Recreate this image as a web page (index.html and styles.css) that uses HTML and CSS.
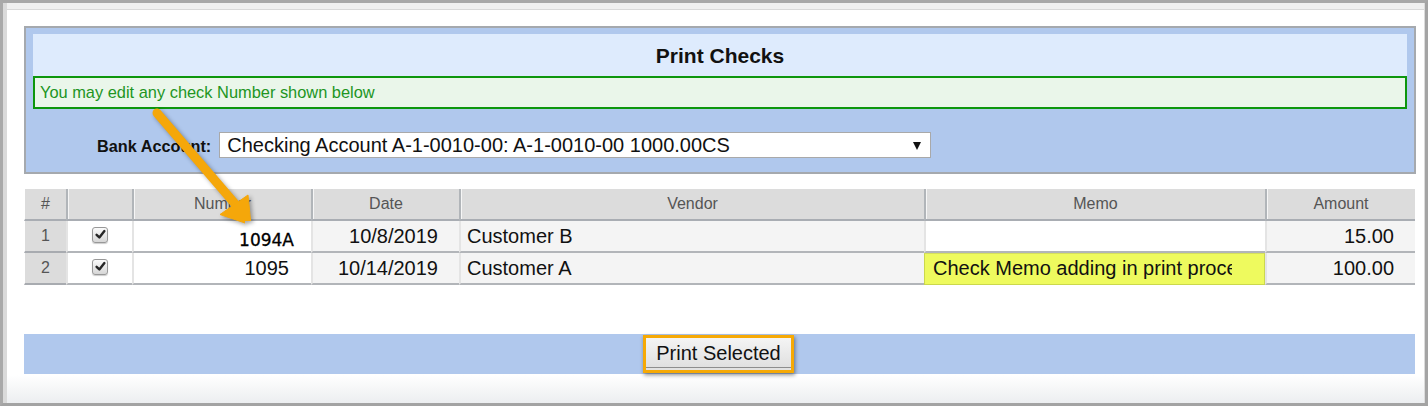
FILE: index.html
```html
<!DOCTYPE html>
<html lang="en">
<head>
<meta charset="utf-8">
<title>Print Checks</title>
<link rel="stylesheet" href="styles.css">
</head>
<body>
<div class="frame">
  <div class="inner">
    <div class="topbar"></div>
    <div class="page">
      <section class="panel">
        <div class="panel-head"><h1 class="title">Print Checks</h1></div>
        <div class="notice">You may edit any check Number shown below</div>
        <div class="bank-row">
          <span class="bank-label">Bank Account:</span>
          <div class="select">
            <span class="select-text">Checking Account A-1-0010-00: A-1-0010-00 1000.00CS</span>
            <span class="caret"></span>
          </div>
        </div>
      </section>

      <div class="grid">
        <div class="hd hd-first">#</div>
        <div class="hd"></div>
        <div class="hd">Number</div>
        <div class="hd">Date</div>
        <div class="hd">Vendor</div>
        <div class="hd">Memo</div>
        <div class="hd">Amount</div>

        <div class="cell c-idx">1</div>
        <div class="cell c-chk"><span class="checkbox"><svg viewBox="0 0 16 16"><path d="M3.2 8.4 L6.6 11.6 L12.8 3.8" fill="none" stroke="#262626" stroke-width="3" stroke-linecap="round" stroke-linejoin="round"/></svg></span></div>
        <div class="cell c-no c-no-edit">1094A</div>
        <div class="cell c-date">10/8/2019</div>
        <div class="cell c-vendor">Customer B</div>
        <div class="cell c-memo"></div>
        <div class="cell c-amt">15.00</div>

        <div class="cell c-idx">2</div>
        <div class="cell c-chk"><span class="checkbox"><svg viewBox="0 0 16 16"><path d="M3.2 8.4 L6.6 11.6 L12.8 3.8" fill="none" stroke="#262626" stroke-width="3" stroke-linecap="round" stroke-linejoin="round"/></svg></span></div>
        <div class="cell c-no">1095</div>
        <div class="cell c-date">10/14/2019</div>
        <div class="cell c-vendor">Customer A</div>
        <div class="cell c-memo c-memo-hl"><span class="memo-text">Check Memo adding in print process</span></div>
        <div class="cell c-amt">100.00</div>
      </div>

      <div class="actions">
        <div class="btn-ring"><button class="btn" type="button">Print Selected</button></div>
      </div>
    </div>
  </div>

  <svg class="arrow" width="1428" height="406" viewBox="0 0 1428 406">
    <defs>
      <clipPath id="cut">
        <path d="M0 0H1428V221H245V406H0Z"/>
      </clipPath>
    </defs>
    <g clip-path="url(#cut)" fill="#f5a70a" stroke="#f5a70a">
      <line x1="157" y1="113" x2="236" y2="205" stroke-width="9" stroke-linecap="round"/>
      <polygon points="251,225 220,214.5 248,195" stroke-width="1" stroke-linejoin="round"/>
    </g>
  </svg>
</div>
</body>
</html>
```

FILE: styles.css
```css
* { box-sizing: border-box; }

html, body {
  margin: 0;
  padding: 0;
  background: #ffffff;
}

body {
  font-family: "Liberation Sans", Arial, sans-serif;
  color: #111;
}

.frame {
  position: relative;
  width: 1428px;
  height: 406px;
  border-top: 3px solid #a8a8a8;
  border-left: 3px solid #a9a9a9;
  border-right: 3px solid #a4a4a4;
  border-bottom: 3px solid #a3a3a3;
  overflow: hidden;
}

.inner {
  height: 100%;
  border-left: 4px solid #dadada;
  border-right: 1px solid #dcdcdc;
  background: linear-gradient(to bottom, #ffffff 0, #ffffff 372px, #eceef0 400px);
}

.topbar {
  height: 7px;
  background: #f0f0f0;
  border-bottom: 1px solid #d9d9d9;
}

.page {
  padding: 16px 8px 0 17px;
}

/* ---------- top panel ---------- */
.panel {
  width: 1392px;
  border: 2px solid #a5a9ae;
  background: #b0c8ed;
  padding: 6px 7px 0 7px;
}

.panel-head {
  height: 42px;
  background: #deebfd;
  display: flex;
  align-items: center;
  justify-content: center;
}

.title {
  margin: 0;
  font-size: 21px;
  font-weight: bold;
  color: #111;
  padding-top: 1px;
}

.notice {
  height: 33px;
  border: 2px solid #0d960d;
  background: #eaf6ea;
  color: #21951f;
  font-size: 16.4px;
  line-height: 29px;
  padding-left: 5px;
}

.bank-row {
  display: flex;
  align-items: center;
  gap: 8px;
  padding: 23px 0 14px 64px;
}

.bank-label {
  font-size: 16.3px;
  font-weight: bold;
  color: #111;
  padding-top: 3px;
}

.select {
  width: 712px;
  height: 26px;
  background: #ffffff;
  border: 1px solid #a9a9a9;
  display: flex;
  align-items: center;
  justify-content: space-between;
  padding: 0 9px 0 7px;
}

.select-text {
  font-size: 20px;
  color: #111;
  white-space: nowrap;
}

.caret {
  width: 0;
  height: 0;
  border-left: 4.5px solid transparent;
  border-right: 4.5px solid transparent;
  border-top: 8px solid #111;
  margin-top: 1px;
}

/* ---------- grid ---------- */
.grid {
  margin-top: 15px;
  display: grid;
  width: 1391px;
  grid-template-columns: 42px 66px 179px 148px 465px 341px 150px;
  grid-auto-rows: 32px;
}

.hd {
  background: #dcdcdc;
  color: #555;
  font-size: 16px;
  text-align: center;
  line-height: 30px;
  border-bottom: 2px solid #a9adb3;
  border-left: 2px solid #b1b5b9;
  box-shadow: inset 1px 0 0 #f6f6f6;
}

.hd-first {
  border-left: 1px solid #ffffff;
  box-shadow: none;
}

.cell {
  font-size: 20px;
  line-height: 30px;
  color: #111;
  border-bottom: 2px solid #b2b5b9;
  border-left: 2px solid #e4e4e4;
  white-space: nowrap;
  overflow: hidden;
}

.c-idx {
  background: #dcdcdc;
  color: #555;
  font-size: 16px;
  text-align: center;
  border-left: 1px solid #ffffff;
  border-bottom-color: #a8abb0;
}

.c-chk {
  background: #ffffff;
  display: flex;
  align-items: center;
  justify-content: center;
  padding-bottom: 3px;
}

.checkbox {
  width: 16px;
  height: 16px;
  border: 1px solid #989898;
  border-radius: 3px;
  background: linear-gradient(to bottom, #fbfbfb, #d6d6d6);
  box-shadow: 0 1px 1px rgba(0,0,0,0.2);
  display: flex;
  align-items: center;
  justify-content: center;
}

.checkbox svg {
  width: 13px;
  height: 13px;
  display: block;
}

.c-no {
  background: #ffffff;
  text-align: right;
  padding-right: 22px;
}

.c-no-edit {
  font-family: "DejaVu Sans", Verdana, sans-serif;
  font-size: 17px;
  color: #000;
  line-height: 22px;
  padding-top: 8px;
  padding-right: 17px;
  -webkit-text-stroke: 0.3px #000;
}

.c-date {
  background: #f4f4f4;
  text-align: right;
  padding-right: 21px;
}

.c-vendor {
  background: #f4f4f4;
  padding-left: 6px;
}

.c-memo {
  background: #ffffff;
  padding-left: 8px;
}

.c-memo-hl {
  background: #eefa5e;
  border: 1px solid #cbd84c;
  border-top-color: #d4df5c;
  line-height: 29px;
}

.memo-text {
  display: block;
  width: 299px;
  overflow: hidden;
  white-space: nowrap;
}

.c-amt {
  background: #f4f4f4;
  text-align: right;
  padding-right: 21px;
}

/* ---------- actions ---------- */
.actions {
  margin-top: 49px;
  width: 1391px;
  height: 40px;
  background: #b0c8ed;
  display: flex;
  align-items: center;
  justify-content: center;
}

.btn-ring {
  border: 3px solid #f6a905;
  box-shadow: 1px 2px 4px rgba(0,0,0,0.45);
  height: 38px;
  margin-left: -2px;
}

.btn {
  display: block;
  height: 32px;
  width: 145px;
  margin: 0;
  padding: 0 0 2px 0;
  border: 0;
  font-family: "Liberation Sans", Arial, sans-serif;
  font-size: 20px;
  color: #111;
  background: linear-gradient(to bottom, #f4f4f4, #dedede);
  box-shadow: inset 0 -2px 0 #e2e2e2, inset 0 -3px 0 #8d8d8d;
}

/* ---------- arrow annotation ---------- */
.arrow {
  position: absolute;
  left: -3px;
  top: -3px;
  pointer-events: none;
  filter: drop-shadow(2px 2px 2px rgba(0,0,0,0.35));
}
```
